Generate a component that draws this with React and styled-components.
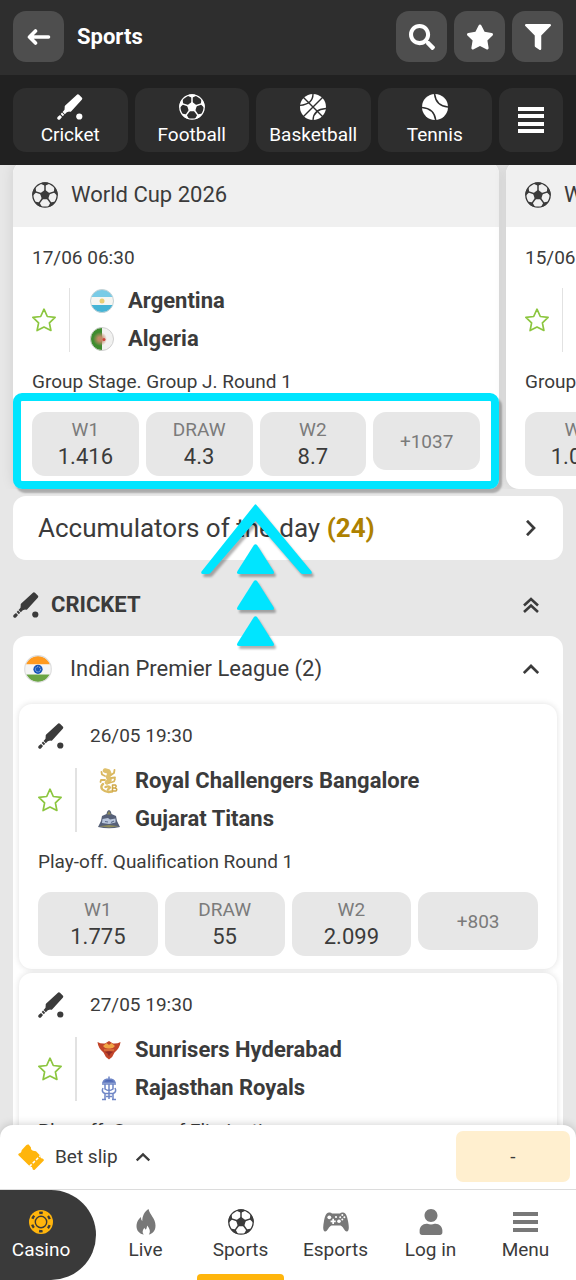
import React from "react";
import styled, { createGlobalStyle } from "styled-components";
import { FaSearch, FaStar, FaFilter, FaUser } from "react-icons/fa";

const GlobalStyle = createGlobalStyle`
  *, *::before, *::after { box-sizing: border-box; }
  body {
    margin: 0;
    background: #e7e7e7;
    color: #3b3b3b;
    font-family: Roboto, "Liberation Sans", sans-serif;
  }
  button { font: inherit; color: inherit; border: 0; margin: 0; padding: 0; background: none; cursor: pointer; }
  a { color: inherit; text-decoration: none; }
  h1, h2, h3, p, ul { margin: 0; padding: 0; font-weight: inherit; font-size: inherit; }
  ul { list-style: none; }
  svg { display: block; flex: none; }
`;

/* ---------- icons ---------- */

const point = (r, deg) => {
  const a = (deg * Math.PI) / 180;
  return `${(13 + r * Math.cos(a)).toFixed(2)} ${(13 + r * Math.sin(a)).toFixed(2)}`;
};
const FIVE = [-90, -18, 54, 126, 198];

const FootballIcon = ({ size = 26 }) => (
  <svg width={size} height={size} viewBox="0 0 26 26" fill="currentColor" aria-hidden="true">
    <circle cx="13" cy="13" r="12.2" fill="none" stroke="currentColor" strokeWidth="1.3" />
    <path d={`M${FIVE.map((d) => point(5.2, d)).join("L")}Z`} />
    {FIVE.map((d) => (
      <React.Fragment key={d}>
        <path d={`M${point(4, d)}L${point(10, d)}`} stroke="currentColor" strokeWidth="1.5" />
        <path d={`M${point(12.6, d - 23)}Q${point(10.4, d - 11)} ${point(9.2, d)}Q${point(10.4, d + 11)} ${point(12.6, d + 23)}A12.6 12.6 0 0 0 ${point(12.6, d - 23)}Z`} />
      </React.Fragment>
    ))}
  </svg>
);

const CricketIcon = () => (
  <svg width="26" height="26" viewBox="0 0 26 26" fill="currentColor" aria-hidden="true">
    <path d="M20.200.5Q21.200 0 22 .7L25 3.700Q25.600 4.500 25 5.400L14.300 17.300Q13.400 18.200 12.200 17.600L9.800 18.200 7.800 20.200 5.600 18 7.500 15.800 7.700 13.300Q7.500 12.300 8.200 11.600Z" />
    <path d="M5 18.600 7.200 20.800 5.800 22.200 3.700 20.100Z" />
    <path d="M3 21 5 23 3.200 25.200Q1.800 26.200.7 25.200T.8 22.800Z" />
    <circle cx="22.300" cy="22.500" r="3.100" />
  </svg>
);

const BasketballIcon = () => (
  <svg width="26" height="26" viewBox="0 0 26 26" aria-hidden="true">
    <circle cx="13" cy="13" r="13" fill="currentColor" />
    <path d="M3 3 23 23M23 3 3 23M13-1Q13.500 10.500-1 11.500M27 14.500Q13 15 13 27" fill="none" stroke="#2e2e2e" strokeWidth="1.400" />
  </svg>
);

const TennisIcon = () => (
  <svg width="26" height="26" viewBox="0 0 26 26" aria-hidden="true">
    <circle cx="13" cy="13" r="13" fill="currentColor" />
    <path d="M12.500-1Q13.500 12.500 27 13M-1 13.500Q12.500 14 13.800 27" fill="none" stroke="#2e2e2e" strokeWidth="1.500" />
  </svg>
);

const LinesIcon = () => (
  <svg width="26" height="26" viewBox="0 0 26 26" fill="currentColor" aria-hidden="true">
    <path d="M0 0h26v4H0zM0 7h26v4H0zM0 15h26v4H0zM0 22h26v4H0z" />
  </svg>
);

const BackIcon = () => (
  <svg width="24" height="18" viewBox="0 0 24 18" fill="none" stroke="currentColor" strokeWidth="3.600" strokeLinecap="round" strokeLinejoin="round" aria-hidden="true">
    <path d="M21.500 9H3M8.500 3 2.500 9 8.500 15" />
  </svg>
);

const StarOutline = () => (
  <svg width="24" height="24" viewBox="0 0 24 24" fill="none" stroke="#8cc63f" strokeWidth="1.700" strokeLinejoin="round" aria-hidden="true">
    <path d="M12 1.200 15.300 8.500 23.100 9.400 17.400 14.800 18.900 22.500 12 19 5.100 22.500 6.600 14.800.9 9.400 8.700 8.500Z" />
  </svg>
);

const ROTATION = { up: 0, right: 90 };
const Chevron = ({ to = "up", size = 16 }) => (
  <svg width={size} height={size} viewBox="0 0 16 16" fill="none" stroke="currentColor" strokeWidth="2.700" aria-hidden="true">
    <path d="M.8 12 8 5 15.200 12" transform={`rotate(${ROTATION[to]} 8 8)`} />
  </svg>
);

const DoubleChevron = () => (
  <svg width="16" height="16" viewBox="0 0 16 16" fill="none" stroke="currentColor" strokeWidth="2.600" aria-hidden="true">
    <path d="M1 8.500 8 2 15 8.500M1 15 8 8.500 15 15" />
  </svg>
);

const TicketIcon = () => (
  <svg width="26" height="26" viewBox="0 0 26 26" aria-hidden="true">
    <path d="M8.200 1.200Q9.500 0 10.700.6L13 3.500Q12.500 6.200 15 6.800L18 7.200 22.600 12Q21.800 14.800 24.500 14.500 26.500 15.300 25.600 16.800L17 25.400Q15.800 26.600 14.600 25.200 14.800 22.600 12 22.600L.8 11.600Q-.4 10.200 1 9.400 4 9.200 3.600 6.200Z" fill="#ffb50c" />
    <path d="M11.500 22.500 22.500 11.500" stroke="#fff" strokeWidth="1.500" strokeDasharray="3 1.600" />
  </svg>
);

const ChipIcon = () => (
  <svg width="24" height="24" viewBox="0 0 24 24" fill="none" aria-hidden="true">
    <circle cx="12" cy="12" r="12" fill="#ffb50c" />
    <g stroke="#3a3a3a">
      <circle cx="12" cy="12" r="5.700" strokeWidth="1.400" />
      <circle cx="12" cy="12" r="9.200" strokeWidth="2.400" strokeDasharray="3.500 6.134" transform="rotate(-101 12 12)" />
    </g>
  </svg>
);

const FlameIcon = () => (
  <svg width="20" height="26" viewBox="0 0 20 26" fill="currentColor" aria-hidden="true">
    <path d="M12.500 0C14 6 19.500 9.500 19.500 16.500 19.500 22 16.500 24.800 12.800 25.500 15 22.500 13.500 19.500 11.300 16.500 10.500 19 10.800 19.800 9.500 20.500 8.800 20.300 8.800 19.500 8.600 18.700 6 21.500 6.300 24 8 25.500 3.500 25 .5 21.500.5 17.200.5 13 3 9.500 5 8 5 10 5.300 11 6.300 12 6.300 7 8.500 2.500 12.500 0Z" />
  </svg>
);

const GamepadIcon = () => (
  <svg width="26" height="20" viewBox="0 0 26 20" aria-hidden="true">
    <path d="M6 .5Q8 .2 9 1.500H17Q18 .2 20 .5C23 .8 24 4 25 9 26 14 26.500 19.500 23.800 19.500 21.500 19.500 20 14 17.500 13.500H8.500C6 14 4.500 19.500 2.200 19.500-.5 19.500 0 14 1 9 2 4 3 .8 6 .5Z" fill="currentColor" />
    <g fill="#fff">
      <circle cx="6.300" cy="5.300" r="1.900" />
      <path d="M9.300 6.800h1.700v1.700h1.700v1.700H11v1.700H9.300v-1.700H7.600V8.500h1.700z" />
      <circle cx="16" cy="9.300" r="1.800" />
      <circle cx="19.300" cy="3" r="1" />
      <circle cx="17.200" cy="5.200" r="1" />
      <circle cx="21.400" cy="5.200" r="1" />
      <circle cx="19.300" cy="7.400" r="1" />
      <circle cx="13" cy="5" r="1.100" />
    </g>
  </svg>
);

const MenuIcon = () => (
  <svg width="25" height="20" viewBox="0 0 25 20" fill="currentColor" aria-hidden="true">
    <path d="M0 0h25v4H0zM0 8h25v4H0zM0 16h25v4H0z" />
  </svg>
);

const ArgentinaFlag = () => (
  <svg width="24" height="24" viewBox="0 0 24 24" aria-hidden="true">
    <clipPath id="flag-ar"><circle cx="12" cy="12" r="11.500" /></clipPath>
    <g clipPath="url(#flag-ar)">
      <path d="M0 0h24v8H0z" fill="#79cbe6" />
      <path d="M0 8h24v8H0z" fill="#f6f6f2" />
      <path d="M0 16h24v8H0z" fill="#45b4d6" />
    </g>
    <circle cx="12" cy="12" r="2.500" fill="#e8cf76" />
    <circle cx="12" cy="12" r="11.500" fill="none" stroke="#c6d3d6" />
  </svg>
);

const AlgeriaFlag = () => (
  <svg width="24" height="24" viewBox="0 0 24 24" aria-hidden="true">
    <defs>
      <clipPath id="flag-dz"><circle cx="12" cy="12" r="11.500" /></clipPath>
      <radialGradient id="flag-dz-mid">
        <stop offset="0.300" stopColor="#c08a66" />
        <stop offset="1" stopColor="#c08a66" stopOpacity="0" />
      </radialGradient>
    </defs>
    <g clipPath="url(#flag-dz)">
      <path d="M0 0h12v24H0z" fill="#3f8c2f" />
      <path d="M12 0h12v24H12z" fill="#f1f1f0" />
      <circle cx="10" cy="12" r="7" fill="url(#flag-dz-mid)" />
    </g>
    <circle cx="14" cy="12.500" r="1.500" fill="#d0433c" />
    <circle cx="12" cy="12" r="11.500" fill="none" stroke="#cfcfcf" />
  </svg>
);

const IndiaFlag = () => (
  <svg width="28" height="28" viewBox="0 0 28 28" aria-hidden="true">
    <clipPath id="flag-in"><circle cx="14" cy="14" r="13" /></clipPath>
    <g clipPath="url(#flag-in)">
      <path d="M0 0h28v9.500H0z" fill="#ff9a1f" />
      <path d="M0 9.500h28v10H0z" fill="#f5f5f5" />
      <path d="M0 19.500h28V28H0z" fill="#6aa544" />
    </g>
    <circle cx="14" cy="14.300" r="4.600" fill="#1656b8" />
    <circle cx="14" cy="14.300" r="2.600" fill="none" stroke="#b9cdec" strokeDasharray="1.200 1" />
    <circle cx="14" cy="14" r="13.300" fill="none" stroke="#dedede" strokeWidth="1.200" />
  </svg>
);

const BangaloreLogo = () => (
  <svg width="24" height="26" viewBox="0 0 24 26" fill="none" strokeLinecap="round" strokeLinejoin="round" aria-hidden="true">
    <path d="M8 2.500 11.500 3.500 12.500 6 11 9 12.500 12 10 14.500" stroke="#dfc06c" strokeWidth="4.500" />
    <path d="M14 7 17 5 17.500 2M14 10 18 9.500M8 8 5 6.500 4.500 4M8 12 4 12 3.500 14M12 15 17 13.500 18 11" stroke="#d9b75e" strokeWidth="1.800" />
    <path d="M6 16Q3 18.500 5.500 21.500 9 25 15 23.500M8.500 19Q12 17.500 13 19.500L11 21.500" stroke="#dcbb63" strokeWidth="2.400" />
    <path d="M15.500 17H18.500Q20 18.500 18 20 21 21 19 23H15.500ZM15.500 20H18" stroke="#d0a848" strokeWidth="1.500" />
  </svg>
);

const GujaratLogo = () => (
  <svg width="24" height="24" viewBox="0 0 24 24" aria-hidden="true">
    <path d="M12 3Q14 3.500 14.500 7L19 9 20 14 23 20Q12 22.500 1 20L4 14 5 9 9.500 7Q10 3.500 12 3Z" fill="#566078" />
    <path d="M5.500 12 11 11 13 12.500 18.500 11.500 18.500 15.500 12 17 5 16Z" fill="#b9c6dc" />
    <path d="M12 4 14 7.500H10ZM2 19.200 12 18 22 19.200 12 20.500Z" fill="#8f8c5b" />
    <path d="M8 14.500 11 15M14 15.500 17 14" stroke="#5e6d8c" strokeWidth="1.200" />
  </svg>
);

const HyderabadLogo = () => (
  <svg width="24" height="24" viewBox="0 0 24 24" aria-hidden="true">
    <path d="M.5 4Q4 6 8 5.500L12 3 16 5.500Q20 6 23.500 4 23 10 17.500 14.500 16 19 12 21.500 8 19 6.500 14.500 1 10 .5 4Z" fill="#c2452a" />
    <path d="M6 8 9.500 5 12 7 14.500 5 18 8Q16 11 12 10.500 8 11 6 8Z" fill="#f0a545" />
    <path d="M8 14Q12 12.500 16 14L13.500 15.500 12 18.500 10.500 15.500Z" fill="#8f2b25" />
    <path d="M7 12H17" stroke="#e98d45" />
  </svg>
);

const RajasthanLogo = () => (
  <svg width="24" height="26" viewBox="0 0 24 26" fill="none" stroke="#6f86c6" strokeWidth="1.500" aria-hidden="true">
    <path d="M12 1.500V4M6 7.500Q7 4 12 4T18 7.500Z" fill="#4e67b4" />
    <path d="M5 9H19M8 9.500V14Q12 17 16 14V9.500M12 9V24M6 13Q4 17 8 18.500H16Q20 17 18 13M8 18.500V25M16 18.500V25M5 24.500H9M15 24.500H19M9 21.500H15" />
  </svg>
);

const PointerArrows = () => (
  <svg width="120" height="152" viewBox="0 0 120 152" fill="#00e5ff" aria-hidden="true">
    <path d="M58.500 5Q59.500 3.500 60.500 5L115.500 71.500Q116.500 74 114 74H107Q105.500 74 104.500 73L59.500 21 14.500 73Q13.500 74 12 74H7Q4.500 74 5.500 71.500Z" />
    {[44, 80, 116].map((y) => (
      <path key={y} transform={`translate(40 ${y})`} d="M17.600 1.500Q19.500-1 21.400 1.500L37.500 27Q39 30 36 30H3Q0 30 1.500 27Z" />
    ))}
  </svg>
);

/* ---------- page parts ---------- */

const Page = styled.div`
  display: flex;
  flex-direction: column;
  height: 100vh;
`;

const Header = styled.header`
  position: relative;
  z-index: 2;
  color: #fff;
`;

const TitleBar = styled.div`
  display: flex;
  align-items: center;
  gap: 7px;
  padding: 11px 13px 13px;
  background: #2e2e2e;
`;

const SquareButton = styled.button`
  display: grid;
  place-items: center;
  width: 51px;
  height: 51px;
  border-radius: 13px;
  background: #4e4e4e;
`;

const PageTitle = styled.h1`
  flex: 1;
  padding-left: 6px;
  font-size: 22px;
  line-height: 26px;
  font-weight: 700;
`;

const SportTabs = styled.nav`
  display: grid;
  grid-template-columns: repeat(4, minmax(0, 1fr)) 64px;
  gap: 7px;
  padding: 13px;
  background: #212121;
`;

const SportTab = styled.button`
  display: flex;
  flex-direction: column;
  align-items: center;
  justify-content: center;
  gap: 3px;
  height: 64px;
  border-radius: 13px;
  background: #2e2e2e;
  font-size: 19px;
  line-height: 24px;
`;

const Content = styled.main`
  flex: 1;
  min-height: 0;
  margin-top: -4px;
  overflow: hidden auto;
  scrollbar-width: none;
`;

const Featured = styled.section`
  position: relative;
  margin-bottom: 7px;
`;

const Carousel = styled.div`
  display: flex;
  gap: 7px;
  padding: 0 13px;
  overflow: auto hidden;
  scrollbar-width: none;
`;

const FeaturedCard = styled.article`
  flex: 0 0 calc(100vw - 90px);
  overflow: hidden;
  border-radius: 13px;
  background: #fff;
  box-shadow: 0 0 13px rgba(0, 0, 0, 0.1);
`;

const FeaturedHead = styled.h2`
  display: flex;
  align-items: center;
  gap: 13px;
  height: 66px;
  padding: 2px 19px 0;
  background: #f0f0f0;
  font-size: 22px;
  line-height: 26px;
`;

const MatchBody = styled.div`
  display: flex;
  flex-direction: column;
  padding: ${(p) => (p.$wide ? "19px" : "18px")} 19px 13px;
`;

const DateRow = styled.div`
  display: flex;
  align-items: center;
  gap: 26px;
  min-height: 26px;
  font-size: 19px;
  line-height: 24px;
`;

const TeamsRow = styled.div`
  display: flex;
  align-items: center;
  gap: 13px;
  margin-top: ${(p) => (p.$wide ? "19px" : "17px")};
`;

const TeamList = styled.ul`
  display: flex;
  flex-direction: column;
  gap: 12px;
  padding: 0 0 0 20px;
  border-left: ${(p) => (p.$wide ? "2px" : "1px")} solid #e2e2e2;
`;

const Team = styled.li`
  display: flex;
  align-items: center;
  gap: 14px;
  height: 26px;
  font-size: 22px;
  line-height: 26px;
  font-weight: 700;
  white-space: nowrap;
`;

const Stage = styled.p`
  margin: 18px 0;
  font-size: 19px;
  line-height: 24px;
  white-space: nowrap;
`;

const Odds = styled.div`
  display: grid;
  grid-template-columns: repeat(4, minmax(0, 1fr));
  align-items: start;
  gap: 7px;
`;

const OddButton = styled.button`
  display: flex;
  flex-direction: column;
  align-items: center;
  justify-content: center;
  height: ${(p) => (p.$more ? "58px" : "64px")};
  padding: ${(p) => (p.$more ? "2px 0 0" : "0 0 2px")};
  border-radius: 13px;
  background: #e7e7e7;
  color: #7b7b7b;
  font-size: 19px;
  line-height: 28px;
`;

const OddValue = styled.span`
  color: #3b3b3b;
  font-size: 22px;
  line-height: 26px;
`;

const Highlight = styled.div`
  position: absolute;
  left: 13px;
  bottom: 0;
  width: calc(100% - 90px);
  height: 96px;
  border: 8px solid #00e5ff;
  border-radius: 9px;
  box-shadow: 3px 4px 2px rgba(0, 0, 0, 0.26);
  pointer-events: none;
`;

const Pointer = styled.div`
  position: absolute;
  top: 99px;
  left: 50%;
  z-index: 1;
  transform: translateX(-50%);
  filter: drop-shadow(2px 3px 1px rgba(0, 0, 0, 0.3));
`;

const AccumulatorLink = styled.a`
  display: flex;
  align-items: center;
  justify-content: space-between;
  height: 64px;
  margin: 0 13px;
  padding: 0 24px 0 25px;
  border-radius: 13px;
  background: #fff;
  font-size: 26px;
  line-height: 30px;
`;

const Count = styled.strong`
  color: #ae8100;
  font-weight: 700;
`;

const SportHead = styled.h2`
  display: flex;
  align-items: center;
  gap: 12px;
  height: 76px;
  padding: 13px 37px 0 13px;
  font-size: 22px;
  line-height: 26px;
  font-weight: 700;
`;

const HeadLabel = styled.span`
  flex: 1;
`;

const League = styled.section`
  margin: 0 13px;
  padding: 0 6px 6px;
  border-radius: 13px;
  background: #fff;
`;

const LeagueHead = styled.h3`
  display: flex;
  align-items: center;
  gap: 18px;
  height: 64px;
  margin-bottom: 4px;
  padding: 2px 18px 0 5px;
  font-size: 22px;
  line-height: 26px;
`;

const MatchCard = styled.article`
  margin-bottom: 4px;
  border-radius: 13px;
  background: #fff;
  box-shadow: 0 0 6px rgba(0, 0, 0, 0.13);
`;

const Footer = styled.footer`
  position: relative;
  z-index: 2;
  margin-top: -13px;
`;

const BetSlip = styled.div`
  display: flex;
  align-items: center;
  justify-content: space-between;
  padding: 6px 6px 7px 18px;
  border-bottom: 1px solid #dcdcdc;
  border-radius: 13px 13px 0 0;
  background: #fff;
  box-shadow: 0 0 10px rgba(0, 0, 0, 0.2);
`;

const SlipToggle = styled.button`
  display: flex;
  align-items: center;
  gap: 18px;
  font-size: 19px;
  line-height: 24px;
`;

const SlipName = styled.span`
  display: flex;
  align-items: center;
  gap: 11px;
`;

const SlipAmount = styled.button`
  width: 114px;
  height: 51px;
  border-radius: 7px;
  background: #ffefcf;
  font-size: 19px;
  line-height: 24px;
`;

const BottomNav = styled.nav`
  display: grid;
  grid-template-columns: 96px repeat(5, minmax(0, 1fr));
  height: 90px;
  background: #fff;
`;

const NavItem = styled.a`
  position: relative;
  display: flex;
  flex-direction: column;
  align-items: center;
  gap: 3px;
  padding-top: 19px;
  font-size: 19px;
  line-height: 24px;
`;

const CasinoItem = styled(NavItem)`
  padding-right: 14px;
  border-radius: 0 45px 45px 0;
  background: #3a3a3a;
  color: #fff;
`;

const NavLinks = styled.div`
  display: grid;
  grid-column: 2 / -1;
  grid-template-columns: repeat(5, minmax(0, 1fr));
  padding: 0 3px 0 2px;
`;

const NavIcon = styled.span`
  display: grid;
  place-items: center;
  height: 26px;
  color: ${(p) => (p.$active ? "#3b3b3b" : "#787878")};
`;

const ActiveBar = styled.span`
  position: absolute;
  right: 4px;
  bottom: 0;
  left: 4px;
  height: 6px;
  border-radius: 4px 4px 0 0;
  background: #ffb50c;
`;

/* ---------- data ---------- */

const FEATURED = [
  {
    date: "17/06 06:30",
    teams: [["Argentina", ArgentinaFlag], ["Algeria", AlgeriaFlag]],
    stage: "Group Stage. Group J. Round 1",
    odds: [["W1", "1.416"], ["DRAW", "4.3"], ["W2", "8.7"]],
    more: "+1037",
  },
  {
    date: "15/06",
    teams: [],
    stage: "Group Stage",
    odds: [["W1", "1.065"], ["DRAW", ""], ["W2", ""]],
    more: "",
  },
];

const MATCHES = [
  {
    date: "26/05 19:30",
    teams: [["Royal Challengers Bangalore", BangaloreLogo], ["Gujarat Titans", GujaratLogo]],
    stage: "Play-off. Qualification Round 1",
    odds: [["W1", "1.775"], ["DRAW", "55"], ["W2", "2.099"]],
    more: "+803",
  },
  {
    date: "27/05 19:30",
    teams: [["Sunrisers Hyderabad", HyderabadLogo], ["Rajasthan Royals", RajasthanLogo]],
    stage: "Play-off. Game of Elimination",
    odds: [],
    more: "",
  },
];

const NAV = [
  ["Live", FlameIcon],
  ["Sports", FootballIcon],
  ["Esports", GamepadIcon],
  ["Log in", () => <FaUser size={26} />],
  ["Menu", MenuIcon],
];

function Match({ match, wide }) {
  return (
    <MatchBody $wide={wide}>
      <DateRow>
        {wide && <CricketIcon />}
        <time>{match.date}</time>
      </DateRow>
      <TeamsRow $wide={wide}>
        <button type="button" aria-label="Add to favourites"><StarOutline /></button>
        <TeamList $wide={wide}>
          {match.teams.length === 0 && <><Team /><Team /></>}
          {match.teams.map(([name, Logo]) => (
            <Team key={name}><Logo />{name}</Team>
          ))}
        </TeamList>
      </TeamsRow>
      <Stage>{match.stage}</Stage>
      <Odds>
        {match.odds.map(([label, value]) => (
          <OddButton key={label} type="button">
            {label}
            <OddValue>{value}</OddValue>
          </OddButton>
        ))}
        {match.more && <OddButton type="button" $more>{match.more}</OddButton>}
      </Odds>
    </MatchBody>
  );
}

export default function App() {
  return (
    <Page>
      <GlobalStyle />
      <Header>
        <TitleBar>
          <SquareButton type="button" aria-label="Back"><BackIcon /></SquareButton>
          <PageTitle>Sports</PageTitle>
          <SquareButton type="button" aria-label="Search"><FaSearch size={26} /></SquareButton>
          <SquareButton type="button" aria-label="Favourites"><FaStar size={28} /></SquareButton>
          <SquareButton type="button" aria-label="Filter"><FaFilter size={26} /></SquareButton>
        </TitleBar>
        <SportTabs>
          <SportTab type="button"><CricketIcon />Cricket</SportTab>
          <SportTab type="button"><FootballIcon />Football</SportTab>
          <SportTab type="button"><BasketballIcon />Basketball</SportTab>
          <SportTab type="button"><TennisIcon />Tennis</SportTab>
          <SportTab type="button" aria-label="All sports"><LinesIcon /></SportTab>
        </SportTabs>
      </Header>

      <Content>
        <Featured>
          <Carousel>
            {FEATURED.map((match) => (
              <FeaturedCard key={match.date}>
                <FeaturedHead><FootballIcon />World Cup 2026</FeaturedHead>
                <Match match={match} />
              </FeaturedCard>
            ))}
          </Carousel>
          <Highlight>
            <Pointer><PointerArrows /></Pointer>
          </Highlight>
        </Featured>

        <AccumulatorLink href="#accumulators">
          <span>Accumulators of the day <Count>(24)</Count></span>
          <Chevron to="right" />
        </AccumulatorLink>

        <SportHead>
          <CricketIcon />
          <HeadLabel>CRICKET</HeadLabel>
          <button type="button" aria-label="Collapse all"><DoubleChevron /></button>
        </SportHead>

        <League>
          <LeagueHead>
            <IndiaFlag />
            <HeadLabel>Indian Premier League (2)</HeadLabel>
            <button type="button" aria-label="Collapse league"><Chevron /></button>
          </LeagueHead>
          {MATCHES.map((match) => (
            <MatchCard key={match.date}><Match match={match} wide /></MatchCard>
          ))}
        </League>
      </Content>

      <Footer>
        <BetSlip>
          <SlipToggle type="button">
            <SlipName><TicketIcon />Bet slip</SlipName>
            <Chevron size={14} />
          </SlipToggle>
          <SlipAmount type="button">-</SlipAmount>
        </BetSlip>
        <BottomNav>
          <CasinoItem href="#casino">
            <NavIcon><ChipIcon /></NavIcon>Casino
          </CasinoItem>
          <NavLinks>
            {NAV.map(([label, Icon]) => (
              <NavItem key={label} href={`#${label}`} aria-current={label === "Sports" ? "page" : undefined}>
                <NavIcon $active={label === "Sports"}><Icon /></NavIcon>
                {label}
                {label === "Sports" && <ActiveBar />}
              </NavItem>
            ))}
          </NavLinks>
        </BottomNav>
      </Footer>
    </Page>
  );
}
